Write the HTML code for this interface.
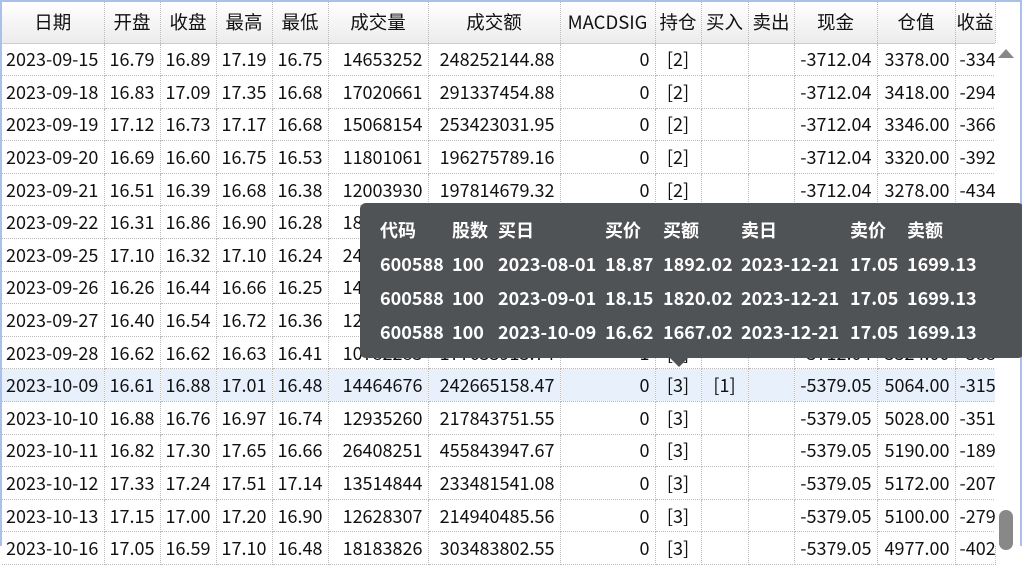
<!DOCTYPE html>
<html><head><meta charset="utf-8"><style>
*{margin:0;padding:0;box-sizing:border-box}
body{width:1022px;height:546px;overflow:hidden;background:#fff;font-family:"Noto Sans CJK SC","Liberation Sans",sans-serif;position:relative}
.frame{position:absolute;left:0;top:0;width:1022px;height:546px;border:2px solid #a9c0ea;border-bottom:none}
table{position:absolute;left:2px;top:2px;border-collapse:collapse;table-layout:fixed;width:993px;font-size:18px;color:#111;line-height:20px}
th{height:41px;font-weight:normal;background:linear-gradient(#fff,#ececec);border-right:1px dotted #bbb;border-bottom:1px solid #ccc;text-align:center;font-size:18.5px}
td{height:32.6px;border-right:1px dotted #bbb;border-bottom:1px dotted #bbb;text-align:right;padding:0 5px 0 0;white-space:nowrap;overflow:hidden}
td.c{text-align:center;padding:0}
td.l{text-align:left;padding:0 0 0 4px;overflow:visible}
tr.h td{background:#e8f0fc}
.sb{position:absolute;left:995px;top:43px;width:24px;height:503px;background:#fff}
.up{position:absolute;left:998px;top:49px;width:0;height:0;border-left:8px solid transparent;border-right:8px solid transparent;border-bottom:9px solid #888}
.thumb{position:absolute;left:999px;top:510px;width:14px;height:40px;background:#888;border-radius:7px}
.tip{position:absolute;left:360px;top:203px;width:664px;height:155px;background:#505356;border-radius:6px;color:#fff;font-weight:bold;font-size:18px;line-height:20px}
.tip:after{content:"";position:absolute;left:310px;top:155px;border-left:9px solid transparent;border-right:9px solid transparent;border-top:9px solid #505356}
.tip span{position:absolute;white-space:nowrap}
</style></head><body>
<table>
<colgroup><col style="width:102px"><col style="width:56px"><col style="width:56px"><col style="width:56px"><col style="width:56px"><col style="width:100px"><col style="width:132px"><col style="width:95px"><col style="width:46px"><col style="width:47px"><col style="width:46px"><col style="width:83px"><col style="width:78px"><col style="width:40px"></colgroup>
<tr><th>日期</th><th>开盘</th><th>收盘</th><th>最高</th><th>最低</th><th>成交量</th><th>成交额</th><th>MACDSIG</th><th>持仓</th><th>买入</th><th>卖出</th><th>现金</th><th>仓值</th><th>收益</th></tr>
<tr><td class="l">2023-09-15</td><td>16.79</td><td>16.89</td><td>17.19</td><td>16.75</td><td>14653252</td><td>248252144.88</td><td>0</td><td class="c">[2]</td><td></td><td></td><td>-3712.04</td><td>3378.00</td><td class="l">-334</td></tr>
<tr><td class="l">2023-09-18</td><td>16.83</td><td>17.09</td><td>17.35</td><td>16.68</td><td>17020661</td><td>291337454.88</td><td>0</td><td class="c">[2]</td><td></td><td></td><td>-3712.04</td><td>3418.00</td><td class="l">-294</td></tr>
<tr><td class="l">2023-09-19</td><td>17.12</td><td>16.73</td><td>17.17</td><td>16.68</td><td>15068154</td><td>253423031.95</td><td>0</td><td class="c">[2]</td><td></td><td></td><td>-3712.04</td><td>3346.00</td><td class="l">-366</td></tr>
<tr><td class="l">2023-09-20</td><td>16.69</td><td>16.60</td><td>16.75</td><td>16.53</td><td>11801061</td><td>196275789.16</td><td>0</td><td class="c">[2]</td><td></td><td></td><td>-3712.04</td><td>3320.00</td><td class="l">-392</td></tr>
<tr><td class="l">2023-09-21</td><td>16.51</td><td>16.39</td><td>16.68</td><td>16.38</td><td>12003930</td><td>197814679.32</td><td>0</td><td class="c">[2]</td><td></td><td></td><td>-3712.04</td><td>3278.00</td><td class="l">-434</td></tr>
<tr><td class="l">2023-09-22</td><td>16.31</td><td>16.86</td><td>16.90</td><td>16.28</td><td>18512003</td><td>310254718.20</td><td>0</td><td class="c">[2]</td><td></td><td></td><td>-3712.04</td><td>3372.00</td><td class="l">-340</td></tr>
<tr><td class="l">2023-09-25</td><td>17.10</td><td>16.32</td><td>17.10</td><td>16.24</td><td>24120385</td><td>398521437.65</td><td>0</td><td class="c">[2]</td><td></td><td></td><td>-3712.04</td><td>3264.00</td><td class="l">-448</td></tr>
<tr><td class="l">2023-09-26</td><td>16.26</td><td>16.44</td><td>16.66</td><td>16.25</td><td>14203311</td><td>234112095.40</td><td>0</td><td class="c">[2]</td><td></td><td></td><td>-3712.04</td><td>3288.00</td><td class="l">-424</td></tr>
<tr><td class="l">2023-09-27</td><td>16.40</td><td>16.54</td><td>16.72</td><td>16.36</td><td>12530862</td><td>207340112.58</td><td>0</td><td class="c">[2]</td><td></td><td></td><td>-3712.04</td><td>3308.00</td><td class="l">-404</td></tr>
<tr><td class="l">2023-09-28</td><td>16.62</td><td>16.62</td><td>16.63</td><td>16.41</td><td>10782283</td><td>177633913.74</td><td>1</td><td class="c">[2]</td><td></td><td></td><td>-3712.04</td><td>3324.00</td><td class="l">-388</td></tr>
<tr class="h"><td class="l">2023-10-09</td><td>16.61</td><td>16.88</td><td>17.01</td><td>16.48</td><td>14464676</td><td>242665158.47</td><td>0</td><td class="c">[3]</td><td class="c">[1]</td><td></td><td>-5379.05</td><td>5064.00</td><td class="l">-315</td></tr>
<tr><td class="l">2023-10-10</td><td>16.88</td><td>16.76</td><td>16.97</td><td>16.74</td><td>12935260</td><td>217843751.55</td><td>0</td><td class="c">[3]</td><td></td><td></td><td>-5379.05</td><td>5028.00</td><td class="l">-351</td></tr>
<tr><td class="l">2023-10-11</td><td>16.82</td><td>17.30</td><td>17.65</td><td>16.66</td><td>26408251</td><td>455843947.67</td><td>0</td><td class="c">[3]</td><td></td><td></td><td>-5379.05</td><td>5190.00</td><td class="l">-189</td></tr>
<tr><td class="l">2023-10-12</td><td>17.33</td><td>17.24</td><td>17.51</td><td>17.14</td><td>13514844</td><td>233481541.08</td><td>0</td><td class="c">[3]</td><td></td><td></td><td>-5379.05</td><td>5172.00</td><td class="l">-207</td></tr>
<tr><td class="l">2023-10-13</td><td>17.15</td><td>17.00</td><td>17.20</td><td>16.90</td><td>12628307</td><td>214940485.56</td><td>0</td><td class="c">[3]</td><td></td><td></td><td>-5379.05</td><td>5100.00</td><td class="l">-279</td></tr>
<tr><td class="l">2023-10-16</td><td>17.05</td><td>16.59</td><td>17.10</td><td>16.48</td><td>18183826</td><td>303483802.55</td><td>0</td><td class="c">[3]</td><td></td><td></td><td>-5379.05</td><td>4977.00</td><td class="l">-402</td></tr>
</table>
<div class="frame"></div>
<div class="sb"></div><div class="up"></div><div class="thumb"></div>
<div class="tip">
<span style="left:20px;top:17px">代码</span><span style="left:92px;top:17px">股数</span><span style="left:138px;top:17px">买日</span><span style="left:245px;top:17px">买价</span><span style="left:303px;top:17px">买额</span><span style="left:381px;top:17px">卖日</span><span style="left:490px;top:17px">卖价</span><span style="left:547px;top:17px">卖额</span>
<span style="left:20px;top:51px">600588</span><span style="left:92px;top:51px">100</span><span style="left:138px;top:51px">2023-08-01</span><span style="left:245px;top:51px">18.87</span><span style="left:303px;top:51px">1892.02</span><span style="left:381px;top:51px">2023-12-21</span><span style="left:490px;top:51px">17.05</span><span style="left:547px;top:51px">1699.13</span>
<span style="left:20px;top:85px">600588</span><span style="left:92px;top:85px">100</span><span style="left:138px;top:85px">2023-09-01</span><span style="left:245px;top:85px">18.15</span><span style="left:303px;top:85px">1820.02</span><span style="left:381px;top:85px">2023-12-21</span><span style="left:490px;top:85px">17.05</span><span style="left:547px;top:85px">1699.13</span>
<span style="left:20px;top:119px">600588</span><span style="left:92px;top:119px">100</span><span style="left:138px;top:119px">2023-10-09</span><span style="left:245px;top:119px">16.62</span><span style="left:303px;top:119px">1667.02</span><span style="left:381px;top:119px">2023-12-21</span><span style="left:490px;top:119px">17.05</span><span style="left:547px;top:119px">1699.13</span>
</div>
</body></html>
